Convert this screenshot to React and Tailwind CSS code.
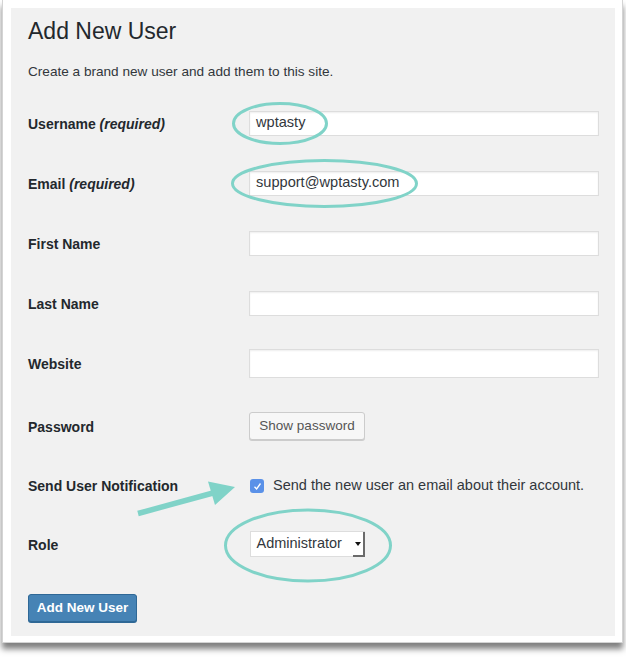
import React from 'react';

const font = { fontFamily: '"Liberation Sans", Arial, sans-serif' };

function TextRow({ label, note, value, h = 'h-[60px]', inputH = 'h-[25px]' }) {
  return (
    <div className={`flex items-center ${h}`}>
      <div className="w-[221px] shrink-0 pt-[2px] text-[14px] font-bold text-[#23282d]">
        {label}
        {note && <span className="italic"> {note}</span>}
      </div>
      <div className={`w-[350px] ${inputH} bg-white border border-[#dddddd] shadow-[inset_0_1px_2px_rgba(0,0,0,0.07)] flex items-center pl-[6px] text-[14.6px] text-[#32373c]`}>
        {value}
      </div>
    </div>
  );
}

function Annotations() {
  const teal = '#80d3c8';
  return (
    <svg className="absolute left-0 top-0 pointer-events-none" width="626" height="657" viewBox="0 0 626 657">
      <ellipse cx="280" cy="123.5" rx="46.5" ry="20" fill="none" stroke={teal} strokeWidth="3" />
      <ellipse cx="324.5" cy="183.5" rx="92" ry="23" fill="none" stroke={teal} strokeWidth="3" />
      <ellipse cx="308" cy="545.5" rx="82.5" ry="35.5" fill="none" stroke={teal} strokeWidth="3" />
      <line x1="138" y1="513.5" x2="213" y2="493" stroke={teal} strokeWidth="5.5" />
      <polygon points="235,487 208,481.5 215,505" fill={teal} />
    </svg>
  );
}

export default function App() {
  return (
    <div className="relative w-[626px] h-[657px] bg-white overflow-hidden" style={font}>
      <div className="ml-[2px] w-[621px] border-x border-b border-[#d4d4d4] bg-white pl-[8px] pr-[7px] pt-[8px] pb-[6px] shadow-[0_6px_6px_rgba(0,0,0,0.5)]">
        <div className="bg-[#f1f1f1] h-[628px] pl-[17px] pt-[9px]">
          <h1 className="h-[29px] leading-[29px] text-[23px] text-[#23282d]">Add New User</h1>
          <p className="mt-[16px] h-[20px] leading-[20px] text-[13.6px] text-[#32373c]">
            Create a brand new user and add them to this site.
          </p>

          <div className="mt-[11px]">
            <TextRow label="Username" note="(required)" value="wptasty" />
            <TextRow label="Email" note="(required)" value="support@wptasty.com" />
            <TextRow label="First Name" />
            <TextRow label="Last Name" />
            <TextRow label="Website" h="h-[61px]" inputH="h-[29px]" />

            <div className="flex items-center h-[64px]">
              <div className="w-[221px] shrink-0 pt-[2px] text-[14px] font-bold text-[#23282d]">Password</div>
              <button className="w-[116px] h-[28px] rounded-[3px] border border-[#cccccc] bg-[#f7f7f7] shadow-[0_1px_0_#cccccc] text-[13.5px] text-[#555555]">
                Show password
              </button>
            </div>

            <div className="flex items-center h-[56px]">
              <div className="w-[221px] shrink-0 text-[14px] font-bold text-[#23282d]">Send User Notification</div>
              <div className="flex items-center">
                <div className="w-[14px] h-[14px] ml-[1px] rounded-[3px] bg-[#5a91e8] flex items-center justify-center">
                  <svg width="9" height="9" viewBox="0 0 9 9">
                    <path d="M1.5 4.8 L3.6 7 L7.5 1.5" fill="none" stroke="white" strokeWidth="1.3" />
                  </svg>
                </div>
                <span className="ml-[9px] text-[14.5px] text-[#32373c]">
                  Send the new user an email about their account.
                </span>
              </div>
            </div>

            <div className="flex items-center h-[60px]">
              <div className="w-[221px] shrink-0 pt-[2px] text-[14px] font-bold text-[#23282d]">Role</div>
              <div className="ml-[0.5px] w-[115px] h-[26px] bg-white border border-[#dddddd] flex items-stretch">
                <span className="flex-1 flex items-center pl-[6px] text-[14.5px] text-[#32373c]">Administrator</span>
                <span className="w-[12px] mr-[-1px] mb-[-1px] border-r-2 border-b-2 border-[#6b6b6b] flex items-center justify-center">
                  <svg width="6" height="4" viewBox="0 0 6 4">
                    <path d="M0 0 L6 0 L3 4 Z" fill="#111" />
                  </svg>
                </span>
              </div>
            </div>
          </div>

          <button className="mt-[20px] w-[109px] h-[28px] rounded-[3px] bg-[#4683b5] border border-[#2f6896] shadow-[0_1px_0_#2f6896] text-white text-[13.5px] font-bold">
            Add New User
          </button>
        </div>
      </div>
      <Annotations />
    </div>
  );
}
